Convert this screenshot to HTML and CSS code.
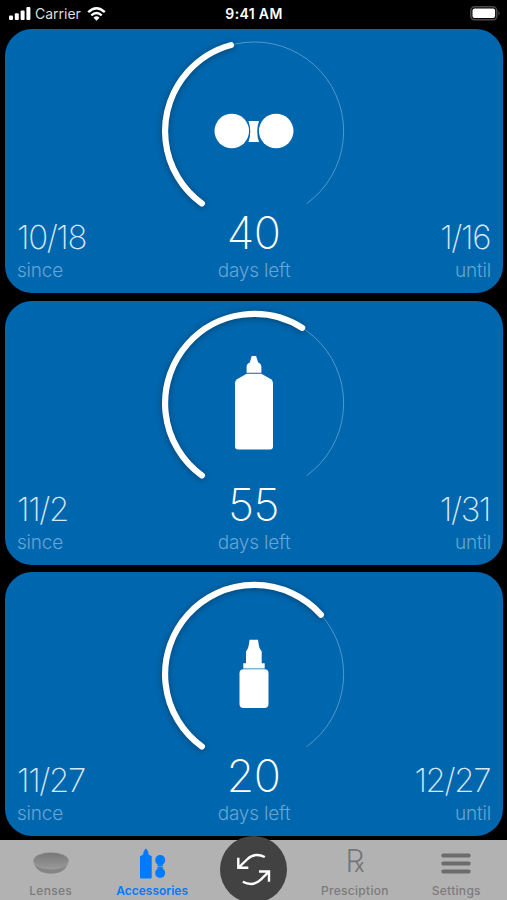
FILE: index.html
```html
<!DOCTYPE html>
<html lang="en">
<head>
  <meta charset="UTF-8">
  <meta name="viewport" content="width=device-width, initial-scale=1.0">
  <title>Accessories</title>
  <link rel="stylesheet" href="styles.css">
</head>
<body>
  <div class="status-bar">
    <div class="status-left">
      <svg class="signal" width="22" height="13" viewBox="0 0 22 13">
        <rect x="0" y="8.5" width="4" height="4.5" rx="1"/>
        <rect x="5.8" y="6.3" width="4" height="6.7" rx="1"/>
        <rect x="11.6" y="3.5" width="4" height="9.5" rx="1"/>
        <rect x="17.4" y="0" width="4" height="13" rx="1"/>
      </svg>
      <span class="carrier">Carrier</span>
      <svg class="wifi" width="19" height="14" viewBox="0 0 19 14">
        <path d="M1.2 5.2 Q9.5 -2.6 17.8 5.2" fill="none" stroke="#fff" stroke-width="2.4"/>
        <path d="M4.3 8.4 Q9.5 3.6 14.7 8.4" fill="none" stroke="#fff" stroke-width="2.3"/>
        <path d="M6.5 10.7 Q9.5 8 12.5 10.7 L9.5 13.8 Z"/>
      </svg>
    </div>
    <span class="time">9:41 AM</span>
    <svg class="battery" width="31" height="15" viewBox="0 0 31 15">
      <rect x=".8" y=".8" width="26" height="13" rx="3.8" fill="none" stroke="#4a4a4a" stroke-width="1.5"/>
      <rect x="2.5" y="2.5" width="22.6" height="9.6" rx="2"/>
      <path d="M28.5 5 Q30.6 7.3 28.5 9.6 Z" fill="#555"/>
    </svg>
  </div>

  <div class="cards">
    <div class="card">
      <svg class="ring" viewBox="0 0 200 190">
        <path class="track" d="M47.9 172.5 A89.3 89.3 0 1 1 152.9 172.5"/>
        <path class="progress" pathLength="100" stroke-dasharray="44.7 200" d="M47.9 172.5 A89.3 89.3 0 1 1 152.9 172.5"/>
        <circle cx="77.8" cy="100" r="17.3"/>
        <circle cx="122.2" cy="100" r="17.3"/>
        <path d="M94.5 90 H105 Q101.4 100.5 105 111 H94.5 Q98 100.5 94.5 90 Z"/>
      </svg>
      <div class="info">
        <div class="col"><div class="date">10/18</div><div class="label">since</div></div>
        <div class="col center"><div class="days">40</div><div class="label">days left</div></div>
        <div class="col right"><div class="date">1/16</div><div class="label">until</div></div>
      </div>
    </div>

    <div class="card">
      <svg class="ring" viewBox="0 0 200 190">
        <path class="track" d="M47.9 172.5 A89.3 89.3 0 1 1 152.9 172.5"/>
        <path class="progress" pathLength="100" stroke-dasharray="61.2 200" d="M47.9 172.5 A89.3 89.3 0 1 1 152.9 172.5"/>
        <path d="M97.7 53 H102.1 L104.2 59.6 Q107.4 61 107.4 64 V69.8 H92.6 V64 Q92.6 61 95.8 59.6 Z"/>
        <path d="M92.6 70.7 H107.4 L117 76.3 Q119 77.6 119 80.3 V143.5 Q119 146.5 116 146.5 H84 Q81 146.5 81 143.5 V80.3 Q81 77.6 83 76.3 Z"/>
      </svg>
      <div class="info">
        <div class="col"><div class="date">11/2</div><div class="label">since</div></div>
        <div class="col center"><div class="days">55</div><div class="label">days left</div></div>
        <div class="col right"><div class="date">1/31</div><div class="label">until</div></div>
      </div>
    </div>

    <div class="card">
      <svg class="ring" viewBox="0 0 200 190">
        <path class="track" d="M47.9 172.5 A89.3 89.3 0 1 1 152.9 172.5"/>
        <path class="progress" pathLength="100" stroke-dasharray="66.7 200" d="M47.9 172.5 A89.3 89.3 0 1 1 152.9 172.5"/>
        <path d="M95.6 65.8 H104 L104.8 71 Q105 74.5 107.7 77.5 V89.2 H110.7 V94.6 H89.3 V89.2 H92 V77.5 Q94.6 74.5 94.8 71 Z"/>
        <rect x="85.5" y="95.3" width="29" height="38.6" rx="4"/>
      </svg>
      <div class="info">
        <div class="col"><div class="date">11/27</div><div class="label">since</div></div>
        <div class="col center"><div class="days">20</div><div class="label">days left</div></div>
        <div class="col right"><div class="date">12/27</div><div class="label">until</div></div>
      </div>
    </div>
  </div>

  <nav class="tab-bar">
    <a class="tab">
      <svg width="40" height="36" viewBox="0 0 40 36">
        <defs>
          <linearGradient id="lens" x1="0" y1="0" x2="0" y2="1">
            <stop offset="0" stop-color="#777"/>
            <stop offset="1" stop-color="#999"/>
          </linearGradient>
        </defs>
        <path d="M2.5 15 C4 24.5 12 27.7 20 27.7 S36 24.5 37.5 15 Z" fill="#858585"/>
        <ellipse cx="20" cy="14.8" rx="17.7" ry="8.4" fill="url(#lens)" stroke="#a0a0a0" stroke-width=".6"/>
      </svg>
      <span>Lenses</span>
    </a>
    <a class="tab active">
      <svg width="40" height="36" viewBox="0 0 40 36">
        <path d="M13.4 2.7 H14.4 L16.4 6.3 V8.6 L19.7 10.3 V31.5 Q19.7 32.6 18.6 32.6 H9.1 Q8 32.6 8 31.5 V10.3 L11.3 8.6 V6.3 Z"/>
        <circle cx="28.2" cy="14.1" r="5"/>
        <circle cx="28.2" cy="27" r="5"/>
        <path d="M25.2 18.4 H31.2 V19.8 H25.2 Z M25.2 21.2 H31.2 V22.6 H25.2 Z"/>
        <path d="M26 19 H30.4 V22 H26 Z" opacity=".6"/>
      </svg>
      <span>Accessories</span>
    </a>
    <a class="tab-main">
      <svg width="67" height="67" viewBox="0 0 67 67">
        <path d="M18.3 21.7 V31.8 H28.3 M18.3 31.8 L27 23.5 Q34.5 16 44.8 21"/>
        <path d="M39 35.5 H49 V45.7 M49 35.5 L40.8 43.6 Q33 51 22.8 45.7"/>
      </svg>
    </a>
    <a class="tab">
      <span class="rx">&#8478;</span>
      <span>Presciption</span>
    </a>
    <a class="tab">
      <svg width="40" height="36" viewBox="0 0 40 36">
        <path d="M7.2 9.5 H32.8 M7.2 17.5 H32.8 M7.2 25.5 H32.8" stroke="#6c6c6c" stroke-width="3.8" stroke-linecap="round"/>
      </svg>
      <span>Settings</span>
    </a>
  </nav>
</body>
</html>
```
FILE: styles.css
```css
* {
  box-sizing: border-box;
}

body {
  margin: 0;
  height: 900px;
  overflow: hidden;
  display: flex;
  flex-direction: column;
  background: #000;
  color: #fff;
  font-family: Inter, "Liberation Sans", sans-serif;
}

svg {
  display: block;
  fill: currentColor;
}

.status-bar {
  height: 29px;
  padding: 0 6px 2px 9px;
  display: grid;
  grid-template-columns: 1fr auto 1fr;
  align-items: center;
  font-size: 14px;
}

.status-left {
  display: flex;
  align-items: center;
  gap: 5px;
}

.carrier {
  color: #ddd;
  margin-left: -1px;
}

.wifi {
  margin-left: 1px;
}

.time {
  font-weight: 600;
  letter-spacing: 0.35px;
  margin-left: -2px;
}

.battery {
  justify-self: end;
}

.cards {
  flex: 1;
  display: flex;
  flex-direction: column;
  gap: 7.7px;
  padding: 0 4px 0 5px;
}

.card {
  flex: none;
  height: 264px;
  border-radius: 27px;
  background: #0066ad;
  display: flex;
  flex-direction: column;
  align-items: center;
}

.ring {
  flex: none;
  width: 200px;
  height: 190px;
  margin-top: 2px;
}

.track,
.progress {
  fill: none;
  stroke-linecap: round;
}

.track {
  stroke: #4f98cf;
  stroke-width: 1;
}

.progress {
  stroke: #fff;
  stroke-width: 6.2;
  filter: drop-shadow(0 1px 3px rgba(0, 0, 0, 0.35));
}

.info {
  width: 100%;
  margin-top: -14px;
  padding: 0 12px;
  display: grid;
  grid-template-columns: 1fr auto 1fr;
  align-items: end;
}

.center {
  text-align: center;
}

.right {
  text-align: right;
}

.date {
  font-size: 33px;
  line-height: 44px;
  font-weight: 200;
  letter-spacing: -1.4px;
  color: #d5e8f6;
}

.right .date {
  padding-right: 1px;
}

.days {
  font-size: 45px;
  line-height: 52px;
  font-weight: 200;
  letter-spacing: -0.6px;
  padding-right: 1px;
}

.label {
  font-size: 19px;
  line-height: 24px;
  font-weight: 300;
  letter-spacing: -0.2px;
  color: #66a5d3;
}

.tab-bar {
  height: 60px;
  display: grid;
  grid-template-columns: repeat(5, 1fr);
  justify-items: center;
  background: #b2b2b2;
  color: #7b7b7b;
}

.tab {
  display: flex;
  flex-direction: column;
  align-items: center;
  padding-top: 6px;
  font-size: 12px;
  line-height: 17px;
  font-weight: 500;
  letter-spacing: 0.3px;
}

.tab.active {
  color: #007aff;
  font-weight: 600;
  letter-spacing: 0;
}

.tab-main {
  width: 67px;
  height: 67px;
  margin-top: -4px;
  border-radius: 50%;
  background: #424242;
}

.tab-main path {
  fill: none;
  stroke: #fff;
  stroke-width: 2.4;
}

.rx {
  height: 36px;
  font-family: "Noto Sans", "DejaVu Sans", sans-serif;
  font-size: 32px;
  line-height: 28px;
  font-weight: 300;
  letter-spacing: 0;
  color: #757575;
}
```
